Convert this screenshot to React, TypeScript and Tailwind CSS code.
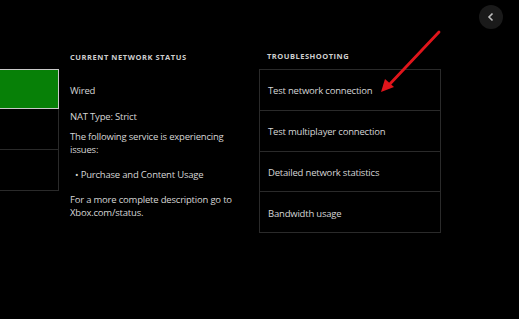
import React from "react";

export default function App() {
  const rows = [
    "Test network connection",
    "Test multiplayer connection",
    "Detailed network statistics",
    "Bandwidth usage",
  ];
  return (
    <div
      className="relative w-[519px] h-[319px] bg-black overflow-hidden text-[#d6d6d6]"
      style={{ fontFamily: '"Open Sans", "Noto Sans", sans-serif' }}
    >
      <div className="flex pt-[51px]">
        {/* left panel */}
        <div className="w-[59px] mt-[18px] flex flex-col">
          <div className="h-[40px] bg-[#078007] border border-l-0 border-[#c9c9c9]" />
          <div className="h-[41px] border-r border-b border-[#2a2a2a]" />
          <div className="h-[41px] border-r border-b border-[#2a2a2a]" />
        </div>

        {/* middle column */}
        <div className="ml-[11px] w-[180px] text-[9.5px] leading-[13px] tracking-[-0.2px]">
          <div className="h-[13px] text-[7.5px] font-bold tracking-[0.55px] text-[#cfcfcf]">
            CURRENT NETWORK STATUS
          </div>
          <div className="mt-[20px]">Wired</div>
          <div className="mt-[13px]">NAT Type: Strict</div>
          <div className="mt-[7px]">
            The following service is experiencing
            <br />
            issues:
          </div>
          <div className="mt-[12px] pl-[5px]">• Purchase and Content Usage</div>
          <div className="mt-[12px]">
            For a more complete description go to
            <br />
            Xbox.com/status.
          </div>
        </div>

        {/* right column */}
        <div className="ml-[9px] w-[182px]">
          <div className="h-[13px] pl-[8px] text-[7.5px] font-bold tracking-[0.5px] text-[#cfcfcf]">
            TROUBLESHOOTING
          </div>
          <div className="mt-[5px] h-[164px] flex flex-col border border-[#2a2a2a]">
            {rows.map((r, i) => (
              <div
                key={r}
                className={
                  "flex-1 flex items-center pl-[8px] pt-[3px] text-[9.5px] tracking-[-0.2px] " +
                  (i < rows.length - 1 ? "border-b border-[#2a2a2a]" : "")
                }
              >
                {r}
              </div>
            ))}
          </div>
        </div>
      </div>

      {/* back button */}
      <div className="absolute left-[479px] top-[5px] w-[24px] h-[24px] rounded-full bg-[#1a1a1a] flex items-center justify-center">
        <svg width="10" height="10" viewBox="0 0 10 10">
          <path d="M6.5 1.5 L3 5 L6.5 8.5" stroke="#bdbdbd" strokeWidth="1.6" fill="none" />
        </svg>
      </div>

      {/* red annotation arrow */}
      <svg className="absolute left-0 top-0" width="519" height="319">
        <line x1="439" y1="32" x2="388" y2="86" stroke="#e0151b" strokeWidth="2.8" strokeLinecap="round" />
        <polygon points="381,92 385,79 394,87" fill="#e0151b" />
      </svg>
    </div>
  );
}
